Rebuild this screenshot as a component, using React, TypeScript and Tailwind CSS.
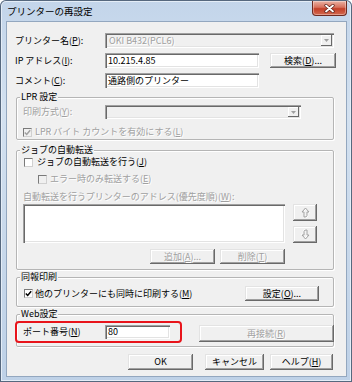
import React from "react";

const FONT = "font-['Noto_Sans_CJK_JP','Noto_Sans',sans-serif]";
const DIS = "text-[#a0a0a0] [text-shadow:1px_1px_0_#fff]";
const RAISED =
  "bg-[#f0f0f0] shadow-[inset_-1px_-1px_0_#696969,inset_1px_1px_0_#e3e3e3,inset_-2px_-2px_0_#a0a0a0,inset_2px_2px_0_#fff]";
const SUNKEN =
  "shadow-[inset_1px_1px_0_#a0a0a0,inset_2px_2px_0_#696969,inset_-1px_-1px_0_#fff,inset_-2px_-2px_0_#e3e3e3]";

function U({ c }: { c: string }) {
  return <span className="underline underline-offset-[1px] decoration-[1px]">{c}</span>;
}

function Btn({
  className,
  disabled,
  children,
}: {
  className: string;
  disabled?: boolean;
  children: React.ReactNode;
}) {
  return (
    <div
      className={`${RAISED} flex items-center justify-center shrink-0 ${
        disabled ? DIS : "text-black"
      } ${className}`}
    >
      {children}
    </div>
  );
}

function Input({ className, children, bg }: { className: string; children?: React.ReactNode; bg?: string }) {
  return (
    <div className={`${SUNKEN} ${bg ?? "bg-white"} flex items-center pl-[3px] shrink-0 ${className}`}>
      {children}
    </div>
  );
}

function Combo({ className, children }: { className: string; children?: React.ReactNode }) {
  return (
    <div className={`${SUNKEN} bg-[#f0f0f0] flex items-center shrink-0 p-[2px] ${className}`}>
      <div className={`flex-1 pl-[2px] ${DIS}`}>{children}</div>
      <div
        className={`w-[11px] h-full flex items-center justify-center shadow-[inset_-1px_-1px_0_#696969,inset_1px_1px_0_#fff]`}
      >
        <svg width="5" height="3" viewBox="0 0 5 3">
          <path d="M0 0 H5 L2.5 3 Z" fill="#a0a0a0" />
        </svg>
      </div>
    </div>
  );
}

function Check({ checked, disabled }: { checked?: boolean; disabled?: boolean }) {
  return (
    <div
      className={`w-[9px] h-[9px] shrink-0 border border-t-[#7a7a7a] border-l-[#7a7a7a] border-b-[#d0d0d0] border-r-[#d0d0d0] flex items-center justify-center ${
        disabled ? "bg-[#f0f0f0]" : "bg-white"
      }`}
    >
      {checked && (
        <svg width="7" height="7" viewBox="0 0 7 7">
          <path
            d="M0.8 3.4 L2.7 5.4 L6.2 1.2"
            fill="none"
            stroke={disabled ? "#a0a0a0" : "#000"}
            strokeWidth="1.5"
          />
        </svg>
      )}
    </div>
  );
}

function Group({
  label,
  className,
  children,
}: {
  label: React.ReactNode;
  className: string;
  children?: React.ReactNode;
}) {
  return (
    <div
      className={`relative border border-[#b5b5b5] rounded-[2px] shadow-[inset_1px_1px_0_#fff,1px_1px_0_#fff] flex flex-col shrink-0 ${className}`}
    >
      <div className="absolute top-[-7px] left-[3px] px-[1px] bg-[#f0f0f0] leading-[12px]">{label}</div>
      {children}
    </div>
  );
}

function Arrow({ down }: { down?: boolean }) {
  return (
    <svg width="9" height="11" viewBox="0 0 9 11" className={down ? "rotate-180" : ""}>
      <path
        d="M4.5 1 L8 5 L6 5 L6 8.5 Q6 10 4 10 L3 10 L3 5 L1 5 Z"
        fill="none"
        stroke="#fff"
        strokeWidth="1"
        transform="translate(0.7 0.7)"
      />
      <path d="M4.5 1 L8 5 L6 5 L6 8.5 Q6 10 4 10 L3 10 L3 5 L1 5 Z" fill="none" stroke="#a0a0a0" strokeWidth="1" />
    </svg>
  );
}

export default function App() {
  return (
    <div className={`w-[352px] h-[382px] overflow-hidden ${FONT} text-[9px] leading-[12px] text-black bg-white`}>
      <div className="w-[352px] h-[382px] rounded-t-[6px] bg-[linear-gradient(to_bottom,#c3d5ea,#d3e1f0_30%,#c9d9eb_60%,#bed1e7)] shadow-[inset_0_0_0_1px_#56687e,inset_0_0_0_2px_#e4edf7] flex flex-col">
        {/* Title bar */}
        <div className="h-[22px] flex items-start justify-between shrink-0">
          <div className="h-[22px] pl-[7px] flex items-center text-[9.5px] text-black">プリンターの再設定</div>
          <div className="mt-[1px] mr-[5px] w-[35px] h-[15px] rounded-b-[4px] border border-[#6e2a20] border-t-0 bg-[linear-gradient(to_bottom,#eab2a4,#d7705c_45%,#c33f28_55%,#d3694f)] flex items-center justify-center shadow-[inset_0_0_0_1px_rgba(255,255,255,0.35)]">
            <svg width="11" height="9" viewBox="0 0 11 9">
              <path d="M2 1.5 L9 7.5 M9 1.5 L2 7.5" stroke="#5a1f17" strokeWidth="3.2" strokeLinecap="round" />
              <path d="M2 1.5 L9 7.5 M9 1.5 L2 7.5" stroke="#fff" strokeWidth="1.8" strokeLinecap="round" />
            </svg>
          </div>
        </div>

        {/* Client */}
        <div className="ml-[7px] w-[339px] h-[354px] bg-[#f0f0f0] shadow-[0_0_0_1px_#93a7bf] flex flex-col shrink-0">
          {/* row 1 */}
          <div className="mt-[11px] h-[15px] flex items-center pl-[8px]">
            <div className="w-[90px] shrink-0">
              プリンター名(<U c="P" />):
            </div>
            <Combo className="w-[229px] h-[15px]">OKI B432(PCL6)</Combo>
          </div>
          {/* row 2 */}
          <div className="mt-[5px] h-[15px] flex items-center pl-[8px]">
            <div className="w-[90px] shrink-0">
              IP アドレス(<U c="I" />):
            </div>
            <Input className="w-[154px] h-[15px]">10.215.4.85</Input>
            <Btn className="ml-[11px] w-[66px] h-[15px]">
              検索(<U c="D" />)...
            </Btn>
          </div>
          {/* row 3 */}
          <div className="mt-[5px] h-[15px] flex items-center pl-[8px]">
            <div className="w-[90px] shrink-0">
              コメント(<U c="C" />):
            </div>
            <Input className="w-[154px] h-[15px]">通路側のプリンター</Input>
          </div>

          {/* LPR group */}
          <Group label="LPR 設定" className="mt-[9px] ml-[9px] w-[318px] h-[43px]">
            <div className="mt-[7px] h-[14px] flex items-center pl-[6px]">
              <div className={`w-[82px] shrink-0 ${DIS}`}>
                印刷方式(<U c="Y" />):
              </div>
              <Combo className="w-[196px] h-[14px]" />
            </div>
            <div className="mt-[7px] h-[12px] flex items-center pl-[6px] gap-[3px]">
              <Check checked disabled />
              <div className={DIS}>
                LPR バイト カウントを有効にする(<U c="L" />)
              </div>
            </div>
          </Group>

          {/* Job group */}
          <Group label="ジョブの自動転送" className="mt-[10px] ml-[9px] w-[318px] h-[120px]">
            <div className="mt-[5px] h-[12px] flex items-center pl-[7px] gap-[4px]">
              <Check />
              <div>
                ジョブの自動転送を行う(<U c="J" />)
              </div>
            </div>
            <div className="mt-[5px] h-[12px] flex items-center pl-[21px] gap-[3px]">
              <Check disabled />
              <div className={DIS}>
                エラー時のみ転送する(<U c="E" />)
              </div>
            </div>
            <div className={`mt-[6px] h-[12px] pl-[6px] ${DIS}`}>
              自動転送を行うプリンターのアドレス(優先度順)(<U c="W" />):
            </div>
            <div className="mt-[1px] flex pl-[6px]">
              <Input className="w-[262px] h-[39px]" />
              <div className="ml-[8px] flex flex-col gap-[5px]">
                <Btn disabled className="w-[24px] h-[17px]">
                  <Arrow />
                </Btn>
                <Btn disabled className="w-[24px] h-[17px]">
                  <Arrow down />
                </Btn>
              </div>
            </div>
            <div className="mt-[6px] flex pl-[133px]">
              <Btn disabled className="w-[65px] h-[15px]">
                追加(<U c="A" />)...
              </Btn>
              <Btn disabled className="ml-[5px] w-[65px] h-[15px]">
                削除(<U c="T" />)
              </Btn>
            </div>
          </Group>

          {/* Broadcast group */}
          <Group label="同報印刷" className="mt-[7px] ml-[9px] w-[318px] h-[30px]">
            <div className="mt-[8px] h-[15px] flex items-center justify-between pl-[7px] pr-[14px]">
              <div className="flex items-center gap-[2px]">
                <Check checked />
                <div>
                  他のプリンターにも同時に印刷する(<U c="M" />)
                </div>
              </div>
              <Btn className="w-[74px] h-[15px]">
                設定(<U c="O" />)...
              </Btn>
            </div>
          </Group>

          {/* Web group */}
          <Group label="Web設定" className="mt-[7px] ml-[9px] w-[318px] h-[33px]">
            <div className="mt-[6px] flex items-start ml-[-2px]">
              <div className="w-[167px] h-[22px] border-2 border-[#e8141b] rounded-[4px] flex items-center pl-[6px] shrink-0">
                <div className="w-[82px] shrink-0">
                  ポート番号(<U c="N" />)
                </div>
                <Input className="w-[65px] h-[14px]">80</Input>
              </div>
              <Btn disabled className="mt-[4px] ml-[17px] w-[135px] h-[17px]">
                再接続(<U c="R" />)
              </Btn>
            </div>
          </Group>

          {/* bottom buttons */}
          <div className="mt-[7px] flex pl-[121px]">
            <Btn className="w-[65px] h-[16px]">OK</Btn>
            <Btn className="ml-[12px] w-[59px] h-[16px]">キャンセル</Btn>
            <Btn className="ml-[6px] w-[63px] h-[16px]">
              ヘルプ(<U c="H" />)
            </Btn>
          </div>
        </div>
      </div>
    </div>
  );
}
